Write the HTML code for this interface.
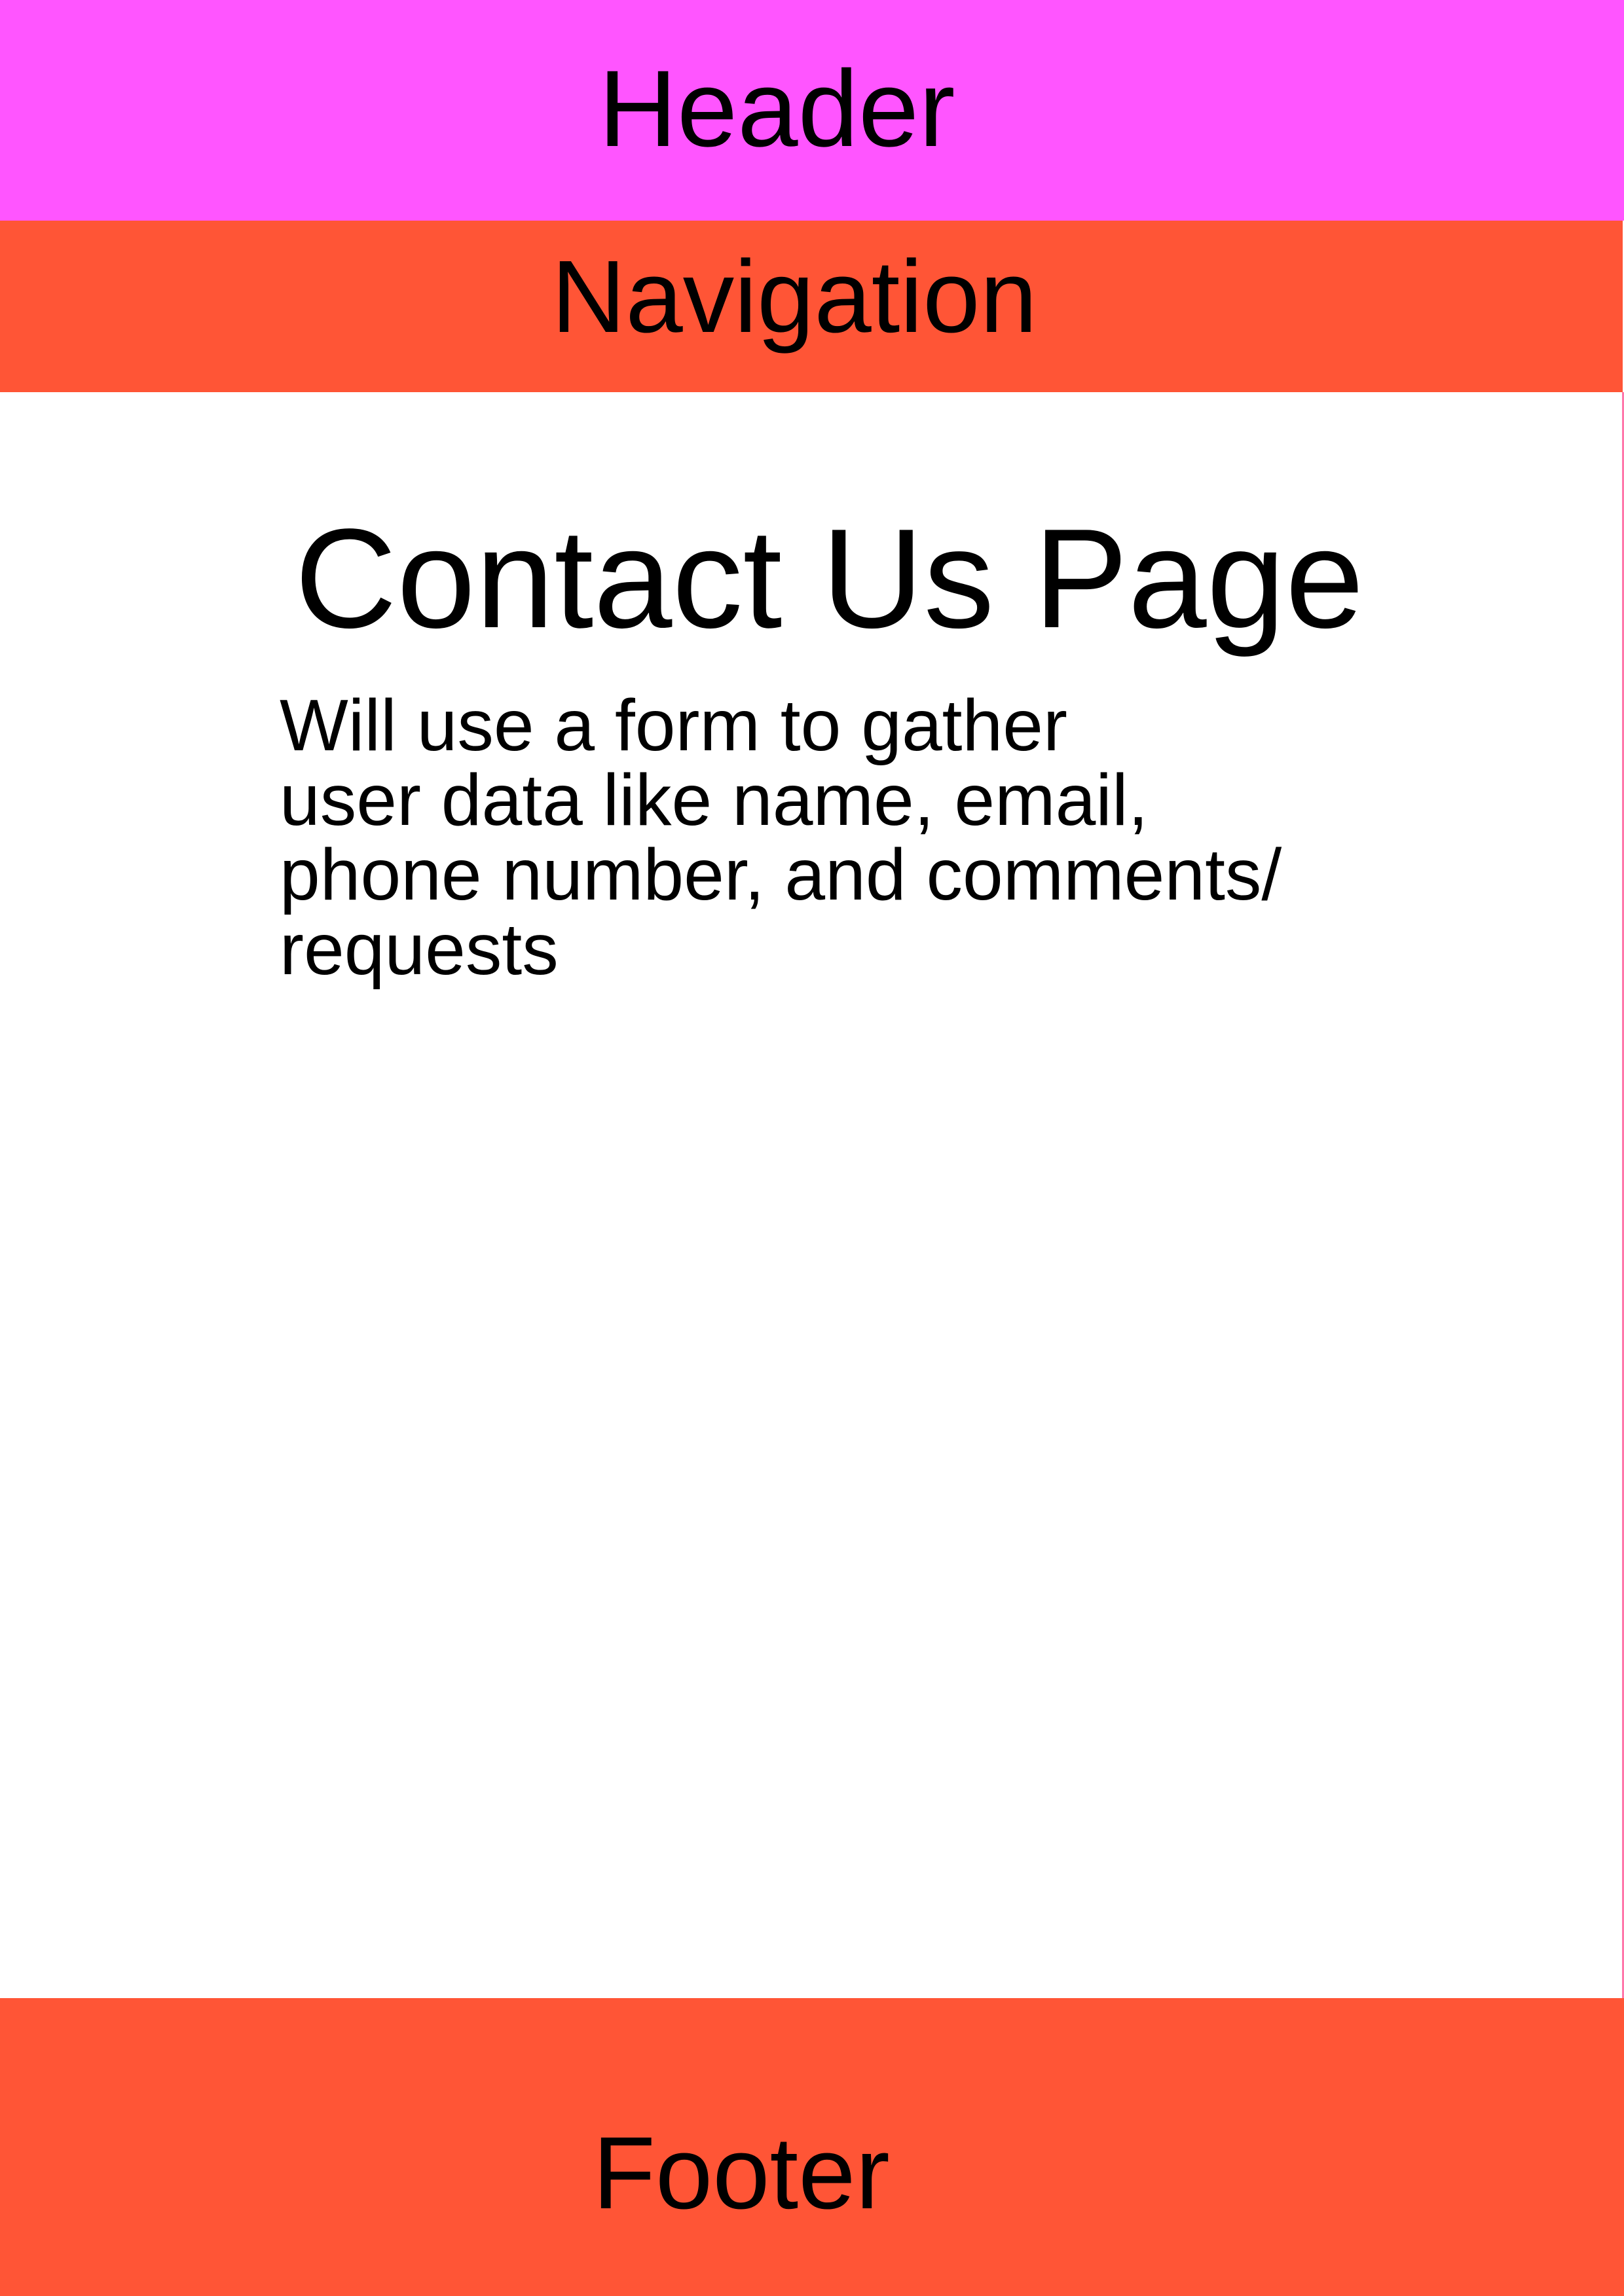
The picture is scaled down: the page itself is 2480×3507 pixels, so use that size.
<!DOCTYPE html>
<html><head><meta charset="utf-8"><style>
html,body{margin:0;padding:0;}
body{width:2480px;height:3507px;position:relative;background:#fff;overflow:hidden;font-family:"Liberation Sans",Arial,sans-serif;color:#000;}
.b{position:absolute;left:0;}
.t{position:absolute;line-height:1;white-space:nowrap;}
</style></head><body>
<div class="b" style="top:0;width:2480px;height:337px;background:#FF55FF"></div>
<div class="b" style="top:337px;width:2478px;height:262px;background:#FF5536"></div>
<div class="b" style="top:599px;left:2477px;width:3px;height:2454px;background:#FF77AA"></div>
<div class="b" style="top:3052px;width:2480px;height:455px;background:#FF5536"></div>
<div class="t" style="left:914px;top:84px;font-size:166px">Header</div>
<div class="t" style="left:842px;top:375px;font-size:157px">Navigation</div>
<div class="t" style="left:905px;top:3241px;font-size:157px">Footer</div>
<div class="t" style="left:450px;top:775px;font-size:216px">Contact Us Page</div>
<div class="t" style="left:427px;top:1051px;font-size:111px;line-height:114px;">Will use a form to gather<br>user data like name, email,<br>phone number, and comments/<br>requests</div>
</body></html>
